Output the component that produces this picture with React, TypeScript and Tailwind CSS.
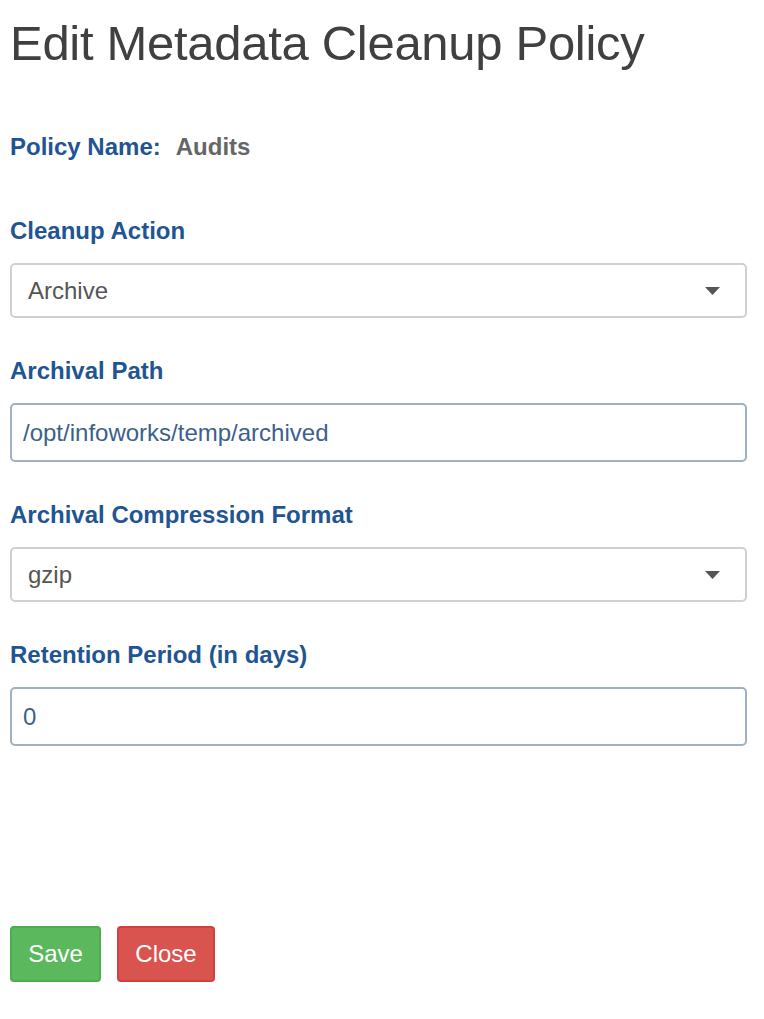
import React from 'react';

function Caret() {
  return (
    <svg width="15" height="8" viewBox="0 0 15 8" className="shrink-0">
      <path d="M0 0 L15 0 L7.5 8 Z" fill="#555555" />
    </svg>
  );
}

function Label({ children }: { children: React.ReactNode }) {
  return <div className="text-[24px] font-bold text-[#1f5592] leading-none">{children}</div>;
}

function SelectBox({ value }: { value: string }) {
  return (
    <div className="flex items-center justify-between h-[55px] border-2 border-[#d0d0d0] rounded-[5px] pl-[16px] pr-[25px] bg-white">
      <span className="text-[24px] text-[#555555]">{value}</span>
      <Caret />
    </div>
  );
}

function TextBox({ value }: { value: string }) {
  return (
    <div className="flex items-center h-[59px] border-2 border-[#9fb0c4] rounded-[5px] px-[11px] bg-white">
      <span className="text-[24px] text-[#3d5f8c]">{value}</span>
    </div>
  );
}

export default function App() {
  return (
    <div className="min-h-screen bg-white px-[10px] pt-[19px] font-['Liberation_Sans',Arial,sans-serif] w-[764px]">
      <h1 className="text-[49px] text-[#404040] leading-none tracking-[-0.3px]">Edit Metadata Cleanup Policy</h1>

      <div className="mt-[67px] flex items-baseline gap-[15px]">
        <Label>Policy Name:</Label>
        <span className="text-[24px] font-bold text-[#666666] leading-none">Audits</span>
      </div>

      <div className="mt-[60px] w-[737px]">
        <Label>Cleanup Action</Label>
        <div className="mt-[20px]">
          <SelectBox value="Archive" />
        </div>

        <div className="mt-[41px]">
          <Label>Archival Path</Label>
        </div>
        <div className="mt-[20px]">
          <TextBox value="/opt/infoworks/temp/archived" />
        </div>

        <div className="mt-[41px]">
          <Label>Archival Compression Format</Label>
        </div>
        <div className="mt-[20px]">
          <SelectBox value="gzip" />
        </div>

        <div className="mt-[41px]">
          <Label>Retention Period (in days)</Label>
        </div>
        <div className="mt-[20px]">
          <TextBox value="0" />
        </div>
      </div>

      <div className="mt-[180px] flex gap-[16px]">
        <button className="h-[56px] w-[91px] rounded-[4px] bg-[#5cb85c] border-2 border-[#4cae4c] text-white text-[24px]">
          Save
        </button>
        <button className="h-[56px] w-[98px] rounded-[4px] bg-[#d9534f] border-2 border-[#d43f3a] text-white text-[24px]">
          Close
        </button>
      </div>
    </div>
  );
}
